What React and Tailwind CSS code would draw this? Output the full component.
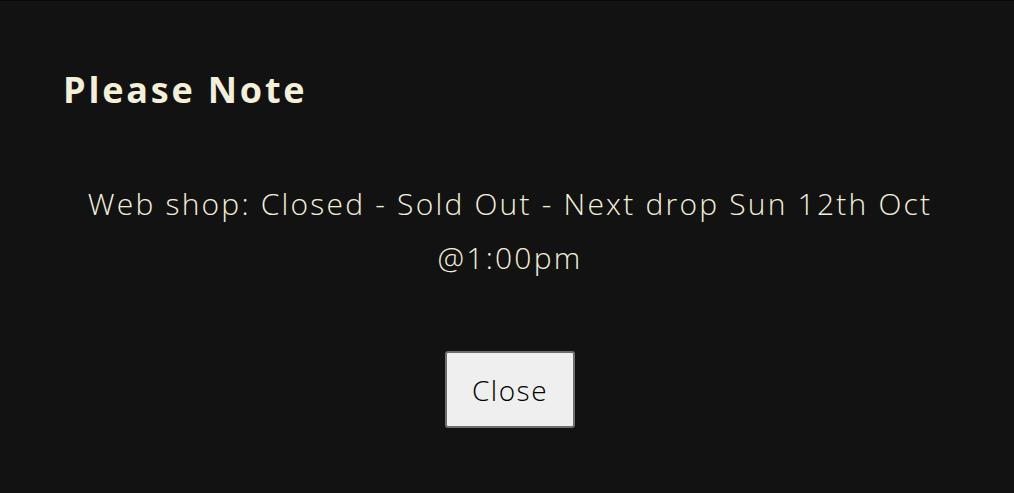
export default function App() {
  return (
    <div className="w-[1014px] h-[493px] bg-[#121212] border-t border-[#0a0a0a] font-['Open_Sans',sans-serif] text-[#f3efd9] flex flex-col">
      <h2 className="pl-[63px] pt-[62px] text-[36px] leading-[54px] font-bold tracking-[2.8px]">Please Note</h2>
      <p className="mt-[60px] pl-[70px] pr-[64px] text-center text-[30px] leading-[54px] font-light tracking-[2.2px]">
        Web shop: Closed - Sold Out - Next drop Sun 12th Oct @1:00pm
      </p>
      <div className="mt-[66px] flex justify-center pl-[6px]">
        <button className="w-[130px] h-[77px] bg-[#efefef] border-2 border-[#6e6e6e] rounded-[3px] text-[28px] font-light tracking-[1.5px] text-black">
          Close
        </button>
      </div>
    </div>
  );
}
